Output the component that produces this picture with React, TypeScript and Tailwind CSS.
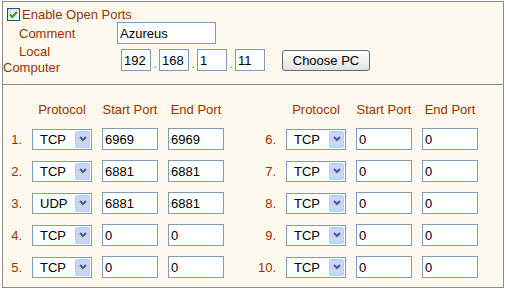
import React from 'react';

const leftRows = [
    { n: "1.", proto: "TCP", start: "6969", end: "6969" },
    { n: "2.", proto: "TCP", start: "6881", end: "6881" },
    { n: "3.", proto: "UDP", start: "6881", end: "6881" },
    { n: "4.", proto: "TCP", start: "0", end: "0" },
    { n: "5.", proto: "TCP", start: "0", end: "0" },
];

const rightRows = [
    { n: "6.", proto: "TCP", start: "0", end: "0" },
    { n: "7.", proto: "TCP", start: "0", end: "0" },
    { n: "8.", proto: "TCP", start: "0", end: "0" },
    { n: "9.", proto: "TCP", start: "0", end: "0" },
    { n: "10.", proto: "TCP", start: "0", end: "0" },
];

function FakeSelect({ value }: { value: string }) {
    return (
        <div className="relative ml-[10px] w-[60px] h-[21px] border border-[#7f9db9] bg-white flex items-center pl-[7px] text-black">
            {value}
            <div className="absolute right-[1px] top-[1px] bottom-[1px] w-[15px] rounded-[2px] border border-[#b9cbf3] bg-[#c6d5f8] flex items-center justify-center">
                <svg width="8" height="6" viewBox="0 0 8 6">
                    <polyline points="1,1 4,4 7,1" fill="none" stroke="#4d6185" strokeWidth="2" />
                </svg>
            </div>
        </div>
    );
}

function PortInput({ value, w }: { value: string; w: string }) {
    return (
        <input
            readOnly
            value={value}
            className={`${w} h-[22px] border border-[#7f9db9] bg-white px-[2px] text-black text-[13px] outline-none`}
        />
    );
}

function PortColumn({ rows, width }: { rows: typeof leftRows; width: string }) {
    return (
        <div className={width}>
            {/* cabecera */}
            <div className="h-[38px] pt-[18px] flex text-[#993300] whitespace-nowrap">
                <div className="w-[19px]" />
                <div className="ml-[10px] w-[60px] text-center">Protocol</div>
                <div className="ml-[10px] w-[56px] text-center">Start Port</div>
                <div className="ml-[10px] w-[56px] text-center">End Port</div>
            </div>
            {rows.map((r) => (
                <div key={r.n} className="h-[32px] flex items-center">
                    <div className="w-[19px] text-right text-[#993300]">{r.n}</div>
                    <FakeSelect value={r.proto} />
                    <div className="ml-[10px]"><PortInput value={r.start} w="w-[56px]" /></div>
                    <div className="ml-[10px]"><PortInput value={r.end} w="w-[56px]" /></div>
                </div>
            ))}
        </div>
    );
}

export default function App() {
    const ip = ["192", "168", "1", "11"];

    return (
        <div className="min-h-screen bg-white pl-[2px] pt-[1px] font-['Liberation_Sans',Arial,sans-serif] text-[13px] leading-[13px]">
            <div className="w-[502px] h-[287px] border border-[#8c8c8c] bg-[#fdf9ee] flex flex-col">

                {/* Ajustes generales */}
                <div className="h-[83px] border-b border-[#8c8c8c] text-[#993300]">
                    <div className="mt-[6px] ml-[4px] h-[13px] flex items-center gap-[2px]">
                        <div className="w-[13px] h-[13px] border border-[#1c5180] bg-gradient-to-br from-[#dcdcd7] to-white flex items-center justify-center">
                            <svg width="11" height="11" viewBox="0 0 11 11">
                                <polyline points="2,5.5 4.3,8 9,2.8" fill="none" stroke="#21a121" strokeWidth="2" />
                            </svg>
                        </div>
                        <span>Enable Open Ports</span>
                    </div>

                    <div className="mt-[1px] h-[22px] flex items-center">
                        <div className="w-[114px] pl-[16px]">Comment</div>
                        <PortInput value="Azureus" w="w-[99px]" />
                    </div>

                    <div className="h-[32px] flex items-center">
                        <div className="w-[114px] leading-[16px]">
                            <div className="pl-[16px]">Local</div>
                            <div>Computer</div>
                        </div>
                        <div className="ml-[4px] flex items-center">
                            {ip.map((part, i) => (
                                <React.Fragment key={i}>
                                    {i > 0 && <span className="w-[8px] mt-[6px] text-center text-[#808080]">.</span>}
                                    <PortInput value={part} w="w-[30px]" />
                                </React.Fragment>
                            ))}
                        </div>
                        <button className="ml-[17px] w-[88px] h-[21px] rounded-[3px] border border-[#5a6a80] bg-gradient-to-b from-[#ffffff] to-[#e3e3dd] text-black text-[13px]">
                            Choose PC
                        </button>
                    </div>
                </div>

                {/* Tabla de puertos */}
                <div className="flex pl-[0px]">
                    <PortColumn rows={leftRows} width="w-[254px]" />
                    <PortColumn rows={rightRows} width="w-[246px]" />
                </div>

            </div>
        </div>
    );
}
